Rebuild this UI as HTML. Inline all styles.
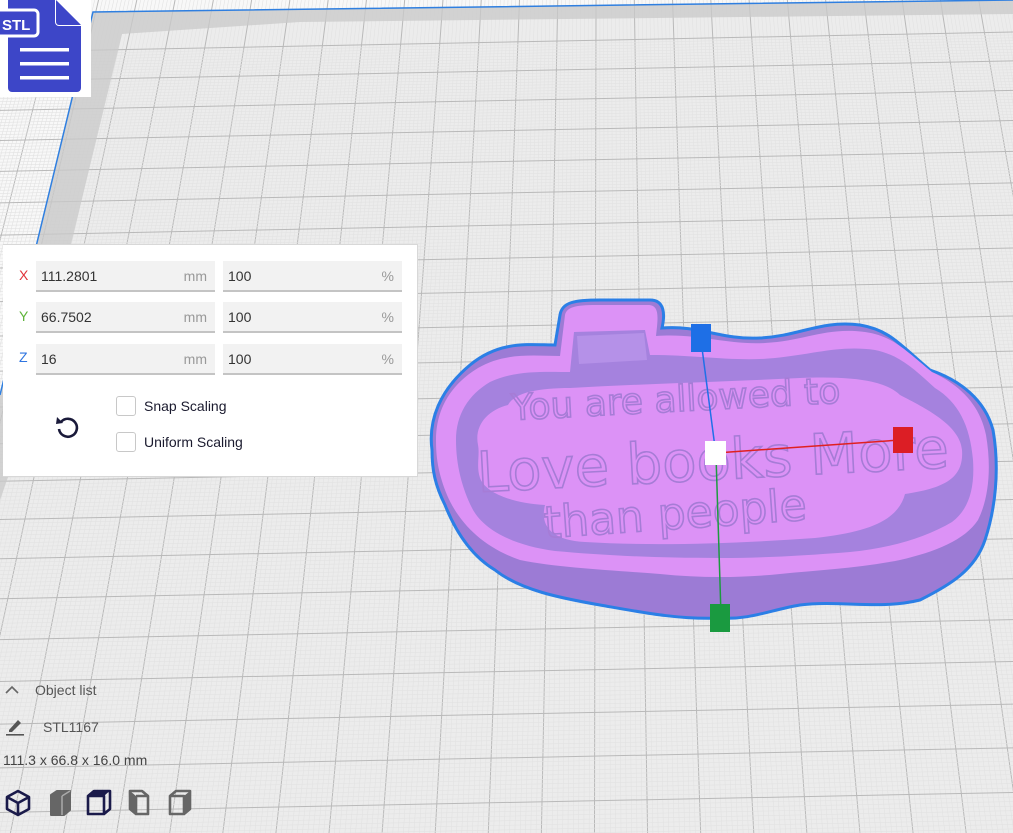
<!DOCTYPE html>
<html><head><meta charset="utf-8"><style>
html,body{margin:0;padding:0;width:1013px;height:833px;overflow:hidden;background:#f8f8f8;font-family:"Liberation Sans",sans-serif;position:relative}
#bg{position:absolute;left:0;top:0}
.panel{position:absolute;left:3px;top:244px;width:414px;height:231px;background:#fff;border:1px solid #d8d8d8;border-left:none}
.lab{position:absolute;left:16px;font-size:14px}
.f{position:absolute;height:31px;background:#f2f2f2;border-bottom:2px solid #c4c4c4;font-size:14px;color:#333;line-height:31px;box-sizing:border-box;padding-left:5px}
.u{position:absolute;right:8px;top:0;color:#999}
.cb{position:absolute;left:113px;width:20px;height:20px;border:1px solid #c8c8c8;border-radius:3px;box-sizing:border-box}
.cl{position:absolute;left:141px;font-size:14px;color:#1a1a2e}
.t{position:absolute;font-size:14px;color:#555}
</style></head><body>
<svg id="bg" width="1013" height="833" viewBox="0 0 1013 833">
<polygon points="93,12 1013,0 1013,833 0,833 0,395" fill="#ececec"/>
<g id="grid"></g>
<polygon points="93,12 1013,0 1013,14 300,22 122,34 72,240 28,420 0,500 0,395" fill="#c9c9c9" opacity="0.75"/>
<polyline points="0,395 93,12 1013,0" fill="none" stroke="#2f7fe0" stroke-width="1.5"/>
<rect x="0" y="0" width="91" height="97" fill="#fff"/>
<path d="M8 0 H56 L81 25 V88 a4 4 0 0 1 -4 4 H12 a4 4 0 0 1 -4 -4 Z" fill="#3d46c8"/>
<path d="M56 0 V22 a3 3 0 0 0 3 3 H81" fill="#fff" stroke="#fff" stroke-width="2"/>
<path d="M56 0 L81 25 H59 a3 3 0 0 1 -3 -3Z" fill="#3d46c8"/>
<rect x="-4" y="10" width="42" height="26" rx="4" fill="#3d46c8" stroke="#fff" stroke-width="3"/>
<text x="2" y="30" font-family="Liberation Sans" font-weight="bold" font-size="15" fill="#fff">STL</text>
<rect x="20" y="48" width="49" height="3.5" fill="#fff"/><rect x="20" y="62" width="49" height="3.5" fill="#fff"/><rect x="20" y="76" width="49" height="3.5" fill="#fff"/>
<!-- object -->
<g>
<path d="M432,450 C428,420 440,390 470,365 C500,340 530,345 555,345 L560,315 C562,302 575,300 600,300 L650,300 C665,300 665,315 662,328 C700,325 720,340 760,338 C800,336 820,320 860,325 C890,330 900,345 930,370 C960,380 985,400 993,430 C1000,470 995,510 985,540 C975,570 950,585 920,600 C880,610 840,600 800,605 C770,610 750,620 720,618 C680,620 640,612 600,605 C560,598 520,590 495,570 C470,555 455,530 445,505 C435,485 432,470 432,450Z" fill="#9c7bd5" stroke="#2b7fe6" stroke-width="3"/>
<path d="M436,440 C436,410 450,385 478,368 C505,352 535,356 560,356 L565,315 C567,306 578,305 600,305 L648,305 C660,305 658,318 656,336 C700,333 725,345 765,343 C805,341 825,327 865,332 C893,336 905,350 932,372 C960,385 980,405 986,435 C992,470 988,500 978,520 C965,540 935,552 900,560 C860,568 820,570 780,574 C740,578 700,578 660,574 C610,570 560,568 520,560 C485,548 460,525 447,495 C439,475 436,460 436,440Z" fill="#dc92f6"/>
<path d="M456,440 C456,415 468,395 490,382 C515,370 545,372 570,372 L574,332 L645,330 L650,355 C700,355 735,362 775,358 C815,354 840,345 875,350 C900,355 915,370 935,388 C958,402 970,425 973,460 C975,490 968,510 952,522 C925,538 890,548 850,552 C800,556 760,558 720,558 C650,558 600,555 555,551 C510,545 482,528 472,508 C462,488 456,465 456,440Z" fill="#a582de"/>
<path d="M577,336 L644,333 L647,360 L579,364Z" fill="#b591e8"/>
<path d="M478,445 C474,425 488,410 508,405 C515,392 540,388 570,388 C640,384 720,382 800,378 C850,376 885,380 900,395 C925,408 960,425 962,450 C964,478 945,488 905,494 C898,520 870,532 815,538 C730,544 650,546 585,542 C550,540 540,525 545,505 C510,503 485,492 480,478 C476,466 480,455 478,445Z" fill="#dc92f6"/>
<g font-family="DejaVu Sans" fill="none" stroke="#a67cd6" stroke-width="1.6">
<text x="512" y="420" font-size="36" transform="rotate(-3 512 420)">You are allowed to</text>
<text x="478" y="492" font-size="56" transform="rotate(-3 478 492)">Love books More</text>
<text x="545" y="538" font-size="44" transform="rotate(-4 545 538)">than people</text>
</g>
</g>
<line x1="702" y1="348" x2="716" y2="455" stroke="#2070e8" stroke-width="1.5"/>
<line x1="716" y1="455" x2="721" y2="615" stroke="#1e9a40" stroke-width="1.5"/>
<line x1="716" y1="453" x2="900" y2="440" stroke="#e02020" stroke-width="1.5"/>
<rect x="691" y="324" width="20" height="28" fill="#1e6fe6"/>
<rect x="893" y="427" width="20" height="26" fill="#dc1e25"/>
<rect x="710" y="604" width="20" height="28" fill="#1a9a40"/>
<rect x="705" y="441" width="21" height="24" fill="#fff"/>
</svg>

<div class="panel">
<div class="lab" style="top:22px;color:#e0333a">X</div>
<div class="lab" style="top:63px;color:#5fb43a">Y</div>
<div class="lab" style="top:104px;color:#2f75e0">Z</div>
<div class="f" style="left:33px;top:16px;width:179px">111.2801<span class="u">mm</span></div>
<div class="f" style="left:220px;top:16px;width:179px">100<span class="u">%</span></div>
<div class="f" style="left:33px;top:57px;width:179px">66.7502<span class="u">mm</span></div>
<div class="f" style="left:220px;top:57px;width:179px">100<span class="u">%</span></div>
<div class="f" style="left:33px;top:99px;width:179px">16<span class="u">mm</span></div>
<div class="f" style="left:220px;top:99px;width:179px">100<span class="u">%</span></div>
<div class="cb" style="top:151px"></div><div class="cl" style="top:153px">Snap Scaling</div>
<div class="cb" style="top:187px"></div><div class="cl" style="top:189px">Uniform Scaling</div>
<svg style="position:absolute;left:50px;top:168px" width="28" height="28" viewBox="0 0 28 28"><path d="M8 9 A9 9 0 1 1 6 16" fill="none" stroke="#1a1a3a" stroke-width="2.6"/><path d="M4 4 L10 10 L3 11Z" fill="#1a1a3a"/></svg>
</div>

<svg style="position:absolute;left:4px;top:684px" width="16" height="12"><path d="M2 9 L8 3 L14 9" fill="none" stroke="#666" stroke-width="1.6"/></svg>
<div class="t" style="left:35px;top:682px">Object list</div>
<svg style="position:absolute;left:5px;top:716px" width="20" height="20"><path d="M4 14 L13 4 L16 7 L7 16 L4 16Z" fill="#555"/><rect x="1" y="18" width="18" height="1.6" fill="#555"/></svg>
<div class="t" style="left:43px;top:719px">STL1167</div>
<div class="t" style="left:3px;top:752px;color:#444">111.3 x 66.8 x 16.0 mm</div>
<svg style="position:absolute;left:4px;top:788px" width="190" height="30" viewBox="0 0 190 30">
<g fill="none" stroke="#1a1a4a" stroke-width="2.6" stroke-linejoin="round"><path d="M14 3 L25 9 V21 L14 27 L3 21 V9Z M3 9 L14 15 L25 9 M14 15 V27"/></g>
<g fill="#666" stroke="#666" stroke-width="2" stroke-linejoin="round"><path d="M47 7 L53 3 H66 V22 L60 27 H47Z"/></g>
<path d="M58 8 L66 3 M58 8 V27" stroke="#aaa" stroke-width="1.5"/>
<g fill="none" stroke="#1a1a4a" stroke-width="2.6" stroke-linejoin="round"><path d="M84 8 H100 V26 H84Z M84 8 L90 3 H106 V21 L100 26"/></g><path d="M85 7 L91 3.5 H105 L100 8Z" fill="#1a1a4a"/>
<g fill="none" stroke="#666" stroke-width="2.6" stroke-linejoin="round"><path d="M126 3 H138 L144 8 V26 H132 L126 21Z M132 8 H144 M132 8 V26"/></g><path d="M126 3 L132 8 V26 L126 21Z" fill="#666"/>
<g fill="none" stroke="#666" stroke-width="2.6" stroke-linejoin="round"><path d="M166 8 H180 V26 H166Z M166 8 L172 3 H186 V21 L180 26"/></g><path d="M180 8 L186 3 V21 L180 26Z" fill="#666"/>
</svg>

<script>
(function(){
var g=document.getElementById('grid'),s='';
var xv=600,yv=-2150;
function X(x0,y0,y){return xv+(x0-xv)*(y-yv)/(y0-yv);}
for(var i=-30;i<40;i++){
 var x0=134+i*38.5; for(var k=1;k<10;k++){var xm=x0+k*3.85;s+='<line x1="'+X(xm,13,0)+'" y1="0" x2="'+X(xm,13,833)+'" y2="833" stroke="#e2e2e2" stroke-width="0.6"/>';}
 s+='<line x1="'+X(x0,13,0)+'" y1="0" x2="'+X(x0,13,833)+'" y2="833" stroke="#b9b9b9" stroke-width="1"/>';
}
var y=40;
while(y<860){var sp=28+y*0.022;
 for(var k=1;k<10;k++){var ym=y+k*sp/10;s+='<line x1="0" y1="'+(ym+12)+'" x2="1013" y2="'+(ym-8)+'" stroke="#e2e2e2" stroke-width="0.6"/>';}
 s+='<line x1="0" y1="'+(y+12)+'" x2="1013" y2="'+(y-8)+'" stroke="#b9b9b9" stroke-width="1"/>';y+=sp;}
g.innerHTML=s;
})();
</script>
</body></html>
